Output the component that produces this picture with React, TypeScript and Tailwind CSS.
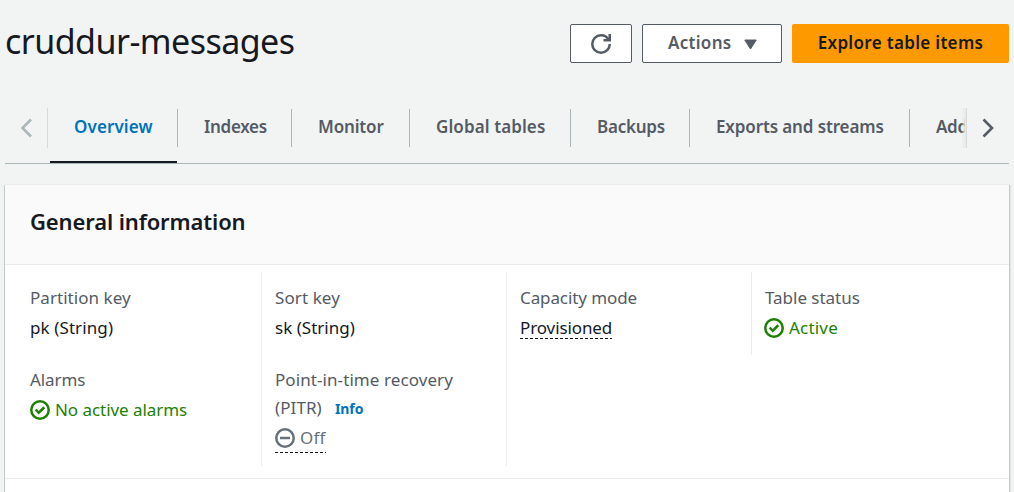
import type { ReactNode } from "react";

const tabs = [
  { label: "Overview", width: "w-[128px]", tracking: "tracking-[0.1px]" },
  { label: "Indexes", width: "w-[114px]", tracking: "tracking-[-0.3px]" },
  { label: "Monitor", width: "w-[118px]", tracking: "tracking-[-0.15px]" },
  { label: "Global tables", width: "w-[161px]", tracking: "tracking-[0.1px]" },
  { label: "Backups", width: "w-[119px]", tracking: "tracking-[-0.25px]" },
  { label: "Exports and streams", width: "w-[220px]", tracking: "tracking-[-0.12px]" },
  { label: "Additional settings", width: "w-[220px]", tracking: "tracking-[-0.3px]" },
];

function RefreshIcon() {
  return (
    <svg className="size-5" viewBox="0 0 16 16" fill="none" stroke="currentColor" strokeWidth="2">
      <path d="M15 8c0 3.9-3.1 7-7 7s-7-3.1-7-7 3.1-7 7-7c2.8 0 5.2 1.6 6.3 4" />
      <path d="M10 5h5V0" />
    </svg>
  );
}

function CheckIcon() {
  return (
    <svg className="size-5 shrink-0" viewBox="0 0 16 16" fill="none" stroke="currentColor" strokeWidth="2">
      <circle cx="8" cy="8" r="7" />
      <path d="m4.5 7.6 2.5 2.6 4.4-4.4" />
    </svg>
  );
}

function MinusIcon() {
  return (
    <svg className="size-5 shrink-0" viewBox="0 0 16 16" fill="none" stroke="currentColor" strokeWidth="2">
      <circle cx="8" cy="8" r="7" />
      <path d="M4 8h8" />
    </svg>
  );
}

function Dashes({ className }: { className: string }) {
  return (
    <svg className={`block h-px ${className}`} stroke="#16191f">
      <line x1="0" y1="0.5" x2="100%" y2="0.5" strokeDasharray="3 2" />
    </svg>
  );
}

function Label({ children, className }: { children: ReactNode; className: string }) {
  return <div className={`h-[30px] leading-[30px] text-[#545b64] ${className}`}>{children}</div>;
}

export default function App() {
  return (
    <div className="h-[492px] w-[1014px] overflow-hidden bg-[#f2f3f3] px-[5px] font-['Noto_Sans','Open_Sans',sans-serif] text-[17px] whitespace-nowrap text-[#16191f]">
      <header className="flex h-[88px] items-start justify-between">
        <h1 className="pt-[18px] text-[34px] leading-[46px] tracking-[-0.55px]">cruddur-messages</h1>
        <div className="flex gap-2.5 pt-6 font-semibold text-[#545b64]">
          <button className="flex h-[39px] w-[62px] items-center justify-center rounded-[2px] border border-[#545b64] bg-white" aria-label="Refresh">
            <RefreshIcon />
          </button>
          <button className="flex h-[39px] w-[140px] items-center rounded-[2px] border border-[#545b64] bg-white pl-[25px]">
            <span className="mb-0.5 w-[76px] text-left leading-[35px] tracking-[0.3px]">Actions</span>
            <svg className="mt-px h-[11px] w-[13px]" viewBox="0 0 13 11" fill="currentColor" stroke="currentColor" strokeLinejoin="round">
              <path d="M.8 1h11.4L6.5 10z" />
            </svg>
          </button>
          <button className="h-[39px] w-[217px] rounded-[2px] bg-[#ff9900] pb-0.5 leading-[35px] tracking-[0.32px] text-[#16191f]">
            Explore table items
          </button>
        </div>
      </header>

      <nav className="flex h-[76px] border-b border-[#aab7b8] pt-5 font-semibold text-[#545b64]">
        <div className="flex h-10 w-[43px] items-center border-r border-[#d5dbdb] pl-[15px]">
          <svg className="h-5 w-3" viewBox="0 0 12 20" fill="none" stroke="#aab7b8" strokeWidth="2.6">
            <path d="m11 1.5-8.5 8.5 8.5 8.5" />
          </svg>
        </div>
        <div className="ml-0.5 flex h-[55px] w-[915px] overflow-hidden">
          {tabs.map((tab, i) => (
            <div
              key={tab.label}
              className={`flex shrink-0 flex-col justify-between pt-px ${tab.width} ${i === 0 ? "text-[#0073bb]" : ""}`}
            >
              <div className={`h-[38px] border-r border-[#aab7b8] leading-[36px] ${i === 0 ? "pl-6" : "pl-[26px]"} ${tab.tracking}`}>
                {tab.label}
              </div>
              {i === 0 && <div className="mr-px h-0.5 bg-[#16191f]" />}
            </div>
          ))}
        </div>
        <div className="-ml-1 h-10 w-[5px] shrink-0 bg-linear-to-r from-[#f2f3f3]/0 to-[#e6e9e9]" />
        <div className="flex h-10 grow items-center border-l border-[#d5dbdb] pl-[15px]">
          <svg className="h-5 w-3" viewBox="0 0 12 20" fill="none" stroke="#545b64" strokeWidth="2.6">
            <path d="m1.5 1.5 8.5 8.5-8.5 8.5" />
          </svg>
        </div>
      </nav>

      <section className="mt-5 h-[340px] border-t border-[#eaeded] bg-white shadow-[-1px_1px_0_0_#c3cccc,1px_1px_0_0_#c3cccc,2px_1px_1px_0_#e2e5e5]">
        <div className="h-20 border-b border-[#eaeded] bg-[#fafafa] pl-[25px]">
          <h2 className="text-[22px] leading-[72px] font-semibold tracking-[-0.13px]">General information</h2>
        </div>
        <div className="flex h-[214px] border-b border-[#eaeded] pt-[7px]">
          <div className="flex h-[194px] w-[257px] flex-col border-r border-[#eaeded] pt-[11px] pl-[25px]">
            <div className="h-[82px]">
              <Label className="tracking-[0.05px]">Partition key</Label>
              <div className="leading-[30px] tracking-[0.1px]">pk (String)</div>
            </div>
            <Label className="tracking-[-0.1px]">Alarms</Label>
            <div className="flex items-center gap-[5px] leading-[30px] tracking-[-0.05px] text-[#1d8102]">
              <CheckIcon />
              No active alarms
            </div>
          </div>
          <div className="flex h-[194px] w-[245px] flex-col border-r border-[#eaeded] pt-[11px] pl-[13px]">
            <div className="h-[82px]">
              <Label className="tracking-[0.1px]">Sort key</Label>
              <div className="leading-[30px] tracking-[0.02px]">sk (String)</div>
            </div>
            <div className="pt-px leading-7 tracking-[0.08px] text-[#545b64]">
              Point-in-time recovery
              <div className="flex">
                <span className="w-[60px]">(PITR)</span>
                <span className="text-[14px] leading-[29px] font-bold tracking-[-0.1px] text-[#0073bb]">Info</span>
              </div>
            </div>
            <div className="flex h-[29px] items-center gap-[5px] text-[#687078]">
              <MinusIcon />
              <span className="pt-px leading-7 tracking-[0.2px]">Off</span>
            </div>
            <Dashes className="w-[51px]" />
          </div>
          <div className="flex h-[83px] w-[245px] flex-col border-r border-[#eaeded] pt-[11px] pl-[13px]">
            <Label className="tracking-[-0.1px]">Capacity mode</Label>
            <div className="h-[25px] leading-[30px] tracking-[-0.1px]">Provisioned</div>
            <Dashes className="w-[92px]" />
          </div>
          <div className="flex flex-col pt-[11px] pl-3">
            <Label className="pl-px tracking-[-0.02px]">Table status</Label>
            <div className="flex items-center gap-[5px] leading-[30px] tracking-[0.2px] text-[#1d8102]">
              <CheckIcon />
              Active
            </div>
          </div>
        </div>
      </section>
    </div>
  );
}
